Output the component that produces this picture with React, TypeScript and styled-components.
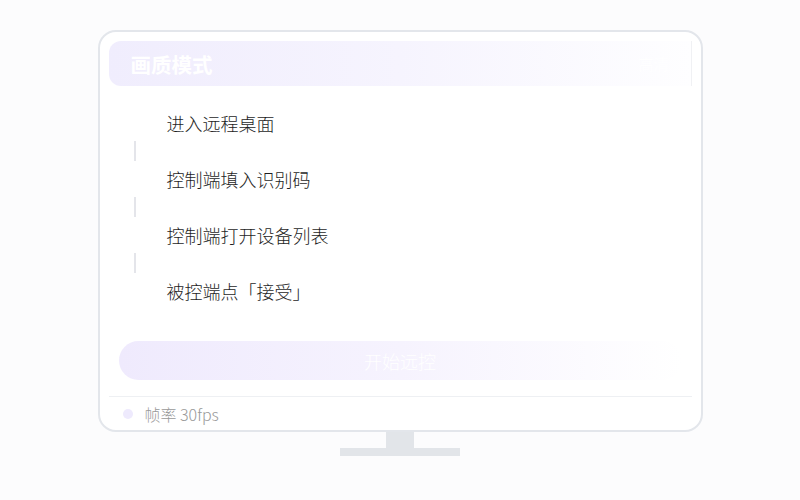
import styled, { createGlobalStyle } from "styled-components";

const GlobalStyle = createGlobalStyle`
  html, body {
    margin: 0;
    padding: 0;
    background: #fcfcfd;
    font-family: "Noto Sans CJK SC", "Noto Sans", sans-serif;
  }
`;

const Page = styled.div`
  width: 800px;
  height: 500px;
  display: flex;
  flex-direction: column;
  align-items: center;
  padding-top: 30px;
  box-sizing: border-box;
`;

const Monitor = styled.div`
  width: 605px;
  box-sizing: border-box;
  border: 2px solid #e3e6eb;
  border-radius: 18px;
  background: #ffffff;
  padding: 9px 9px 0;
  display: flex;
  flex-direction: column;
`;

const Header = styled.div`
  height: 45px;
  border-radius: 12px 0 0 12px;
  border-right: 1px solid #f0f1f4;
  background: linear-gradient(90deg, #f0edfd 0%, #f6f4fe 50%, #fefeff 100%);
  display: flex;
  align-items: center;
  justify-content: space-between;
  padding: 0 22px;
  box-sizing: border-box;
`;

const Title = styled.span`
  color: #ffffff;
  font-size: 20.5px;
  font-weight: 700;
`;

const Badge = styled.span`
  color: #ffffff;
  font-size: 15px;
`;

const Steps = styled.div`
  display: flex;
  flex-direction: column;
  padding: 21px 0 0 58px;
`;

const Step = styled.div`
  height: 32px;
  display: flex;
  align-items: center;
  color: #1e1e1e;
  font-size: 18px;
  font-weight: 300;
`;

const Connector = styled.div`
  width: 2px;
  height: 20px;
  margin: 2px 0 2px -33px;
  background: #e4e5ea;
`;

const StartButton = styled.button`
  margin: 34px 10px 0;
  height: 39px;
  border: none;
  border-radius: 20px;
  background: linear-gradient(90deg, #efeafd 0%, #f6f3fe 50%, #ffffff 100%);
  color: #ffffff;
  font-family: inherit;
  font-size: 18px;
  font-weight: 300;
`;

const Divider = styled.div`
  margin-top: 16px;
  height: 1px;
  background: #eef0f3;
`;

const Footer = styled.div`
  height: 33px;
  display: flex;
  align-items: center;
  gap: 12px;
  padding-left: 14px;
`;

const Dot = styled.span`
  width: 10px;
  height: 10px;
  border-radius: 50%;
  background: #eeeafd;
`;

const FooterText = styled.span`
  color: #999999;
  font-size: 16px;
  font-weight: 300;
`;

const Neck = styled.div`
  width: 28px;
  height: 16px;
  background: #e2e5e9;
`;

const Base = styled.div`
  width: 120px;
  height: 8px;
  background: #e2e5e9;
`;

const steps = ["进入远程桌面", "控制端填入识别码", "控制端打开设备列表", "被控端点「接受」"];

export default function App() {
  return (
    <>
      <GlobalStyle />
      <Page>
        <Monitor>
          <Header>
            <Title>画质模式</Title>
            <Badge>高清</Badge>
          </Header>
          <Steps>
            {steps.map((s, i) => (
              <div key={s}>
                <Step>{s}</Step>
                {i < steps.length - 1 && <Connector />}
              </div>
            ))}
          </Steps>
          <StartButton>开始远控</StartButton>
          <Divider />
          <Footer>
            <Dot />
            <FooterText>帧率 30fps</FooterText>
          </Footer>
        </Monitor>
        <Neck />
        <Base />
      </Page>
    </>
  );
}
